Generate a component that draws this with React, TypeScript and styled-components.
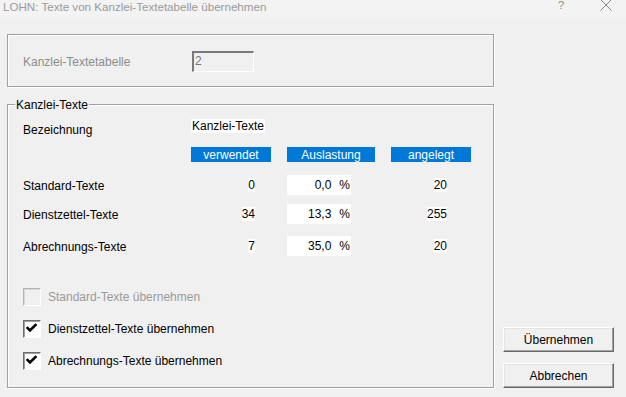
import React from 'react';
import styled, { createGlobalStyle } from 'styled-components';

const Global = createGlobalStyle`
  html, body { margin: 0; padding: 0; background: #f0f0f0; }
  body {
    font-family: "Liberation Sans", Arial, sans-serif;
    font-size: 12px;
    color: #000;
  }
  #root { width: 626px; height: 397px; }
`;

const Window = styled.div`
  width: 626px;
  height: 397px;
  display: flex;
  flex-direction: column;
  background: #f0f0f0;
  overflow: hidden;
`;

const TitleBar = styled.div`
  height: 17px;
  flex-shrink: 0;
  display: flex;
  align-items: flex-start;
  background: #f3f3f3;
  padding: 0 14px 0 3px;
`;

const TitleText = styled.div`
  flex: 1;
  color: #9a9a9a;
  font-size: 11.6px;
  line-height: 14px;
`;

const TitleButtons = styled.div`
  display: flex;
  align-items: flex-start;
  gap: 36px;
  color: #8a8a8a;
`;

const HelpGlyph = styled.span`
  font-size: 11px;
  line-height: 11px;
`;

const Body = styled.div`
  flex: 1;
  display: flex;
  gap: 9px;
  padding: 17px 12px 9px 7px;
  min-height: 0;
`;

const LeftCol = styled.div`
  width: 487px;
  display: flex;
  flex-direction: column;
  gap: 17px;
`;

const Group = styled.div<{ $height?: number }>`
  position: relative;
  box-sizing: border-box;
  border: 1px solid #a0a0a0;
  box-shadow: 1px 1px 0 #fff, inset 1px 1px 0 #fff;
  ${(p) => (p.$height ? `height: ${p.$height}px; flex-shrink: 0;` : 'flex: 1;')}
`;

const TopGroup = styled(Group)`
  display: flex;
  align-items: center;
  padding: 2px 0 0 15px;
`;

const Legend = styled.div`
  position: absolute;
  top: -7px;
  left: 7px;
  padding: 0 1px;
  background: #f0f0f0;
  line-height: 14px;
`;

const DisabledLabel = styled.div<{ $width?: number }>`
  color: #8c8c8c;
  width: ${(p) => p.$width ?? 'auto'}px;
`;

const DisabledInput = styled.div`
  box-sizing: border-box;
  width: 62px;
  height: 21px;
  border-top: 2px solid #7a7a7a;
  border-left: 2px solid #7a7a7a;
  border-right: 1px solid #fff;
  border-bottom: 1px solid #fff;
  padding-left: 1px;
  color: #777;
  line-height: 17px;
`;

const GroupContent = styled.div`
  display: flex;
  flex-direction: column;
  padding: 14px 0 0 15px;
`;

const Row = styled.div<{ $h: number; $top?: number }>`
  display: grid;
  grid-template-columns: 152px 80px 88px 80px;
  column-gap: 16px;
  align-items: center;
  height: ${(p) => p.$h}px;
  margin-top: ${(p) => p.$top ?? 0}px;
`;

const Label = styled.div<{ $shift?: number }>`
  line-height: 14px;
  transform: translateY(${(p) => p.$shift ?? 0}px);
`;

const Whitebox = styled.span`
  background: #fff;
  line-height: 15px;
  padding: 0 1px;
`;

const HeaderCell = styled.div`
  background: #0078d7;
  color: #fff;
  text-align: center;
  height: 15px;
  line-height: 17px;
  overflow: hidden;
`;

const NumCell = styled.div<{ $pad: number }>`
  text-align: right;
  padding-right: ${(p) => p.$pad}px;
`;

const NumText = styled.span`
  background: #fff;
  line-height: 14px;
  display: inline-block;
`;

const Field = styled.div`
  width: 64px;
  height: 20px;
  background: #fff;
  text-align: right;
  line-height: 20px;
  padding-right: 1px;
  box-sizing: border-box;
`;

const Percent = styled.span`
  margin-left: 8px;
`;

const CheckList = styled.div`
  display: flex;
  flex-direction: column;
  gap: 15px;
  margin-top: 32px;
`;

const CheckRow = styled.div<{ $disabled?: boolean }>`
  display: flex;
  align-items: center;
  gap: 7px;
  height: 17px;
  color: ${(p) => (p.$disabled ? '#9a9a9a' : '#000')};
`;

const Box = styled.div<{ $disabled?: boolean }>`
  box-sizing: border-box;
  width: 18px;
  height: 18px;
  border-top: 1px solid ${(p) => (p.$disabled ? '#b4b4b4' : '#6d6d6d')};
  border-left: 1px solid ${(p) => (p.$disabled ? '#b4b4b4' : '#6d6d6d')};
  border-right: 1px solid #fff;
  border-bottom: 1px solid #fff;
  box-shadow: inset 1px 1px 0 ${(p) => (p.$disabled ? '#d8d8d8' : '#a0a0a0')};
  background: ${(p) => (p.$disabled ? '#f0f0f0' : '#fff')};
  display: flex;
  align-items: flex-start;
  justify-content: flex-start;
`;

const ButtonCol = styled.div`
  width: 111px;
  display: flex;
  flex-direction: column;
  justify-content: flex-end;
  gap: 11px;
`;

const Button = styled.button`
  box-sizing: border-box;
  width: 111px;
  height: 25px;
  padding: 0;
  background: #f0f0f0;
  border: 1px solid;
  border-color: #fff #696969 #696969 #fff;
  box-shadow: inset -1px -1px 0 #a0a0a0, inset 1px 1px 0 #e3e3e3;
  font-family: "Liberation Sans", Arial, sans-serif;
  font-size: 12px;
  color: #000;
`;

const Check = () => (
  <svg width="12" height="12" viewBox="0 0 12 12" style={{ margin: '2px 0 0 2px' }}>
    <path d="M1.5 5 L4 7.5 L9.5 2" stroke="#000" strokeWidth="2.6" fill="none" strokeLinecap="square" />
  </svg>
);

const CloseIcon = () => (
  <svg width="12" height="11" viewBox="0 0 12 11">
    <path d="M0.5 -0.5 L11.5 10.5 M11.5 -0.5 L0.5 10.5" stroke="#8a8a8a" strokeWidth="1" />
  </svg>
);

const rows = [
  { label: 'Standard-Texte', used: '0', load: '0,0', total: '20', top: 13 },
  { label: 'Dienstzettel-Texte', used: '34', load: '13,3', total: '255', top: 9 },
  { label: 'Abrechnungs-Texte', used: '7', load: '35,0', total: '20', top: 12 },
];

const checks = [
  { label: 'Standard-Texte übernehmen', disabled: true, checked: false },
  { label: 'Dienstzettel-Texte übernehmen', disabled: false, checked: true },
  { label: 'Abrechnungs-Texte übernehmen', disabled: false, checked: true },
];

export default function App() {
  return (
    <>
      <Global />
      <Window>
        <TitleBar>
          <TitleText>LOHN: Texte von Kanzlei-Textetabelle übernehmen</TitleText>
          <TitleButtons>
            <HelpGlyph>?</HelpGlyph>
            <CloseIcon />
          </TitleButtons>
        </TitleBar>
        <Body>
          <LeftCol>
            <TopGroup $height={53}>
              <DisabledLabel $width={169}>Kanzlei-Textetabelle</DisabledLabel>
              <DisabledInput>2</DisabledInput>
            </TopGroup>
            <Group>
              <Legend>Kanzlei-Texte</Legend>
              <GroupContent>
                <Row $h={15}>
                  <Label $shift={3}>Bezeichnung</Label>
                  <div style={{ gridColumn: '2 / span 2' }}>
                    <Whitebox>Kanzlei-Texte</Whitebox>
                  </div>
                </Row>
                <Row $h={15} $top={13}>
                  <div />
                  <HeaderCell>verwendet</HeaderCell>
                  <HeaderCell>Auslastung</HeaderCell>
                  <HeaderCell>angelegt</HeaderCell>
                </Row>
                {rows.map((r) => (
                  <Row key={r.label} $h={20} $top={r.top}>
                    <Label $shift={1}>{r.label}</Label>
                    <NumCell $pad={16}>
                      <NumText>{r.used}</NumText>
                    </NumCell>
                    <Field>
                      {r.load}
                      <Percent>%</Percent>
                    </Field>
                    <NumCell $pad={24}>
                      <NumText>{r.total}</NumText>
                    </NumCell>
                  </Row>
                ))}
                <CheckList>
                  {checks.map((c) => (
                    <CheckRow key={c.label} $disabled={c.disabled}>
                      <Box $disabled={c.disabled}>{c.checked && <Check />}</Box>
                      <span>{c.label}</span>
                    </CheckRow>
                  ))}
                </CheckList>
              </GroupContent>
            </Group>
          </LeftCol>
          <ButtonCol>
            <Button>Übernehmen</Button>
            <Button>Abbrechen</Button>
          </ButtonCol>
        </Body>
      </Window>
    </>
  );
}
